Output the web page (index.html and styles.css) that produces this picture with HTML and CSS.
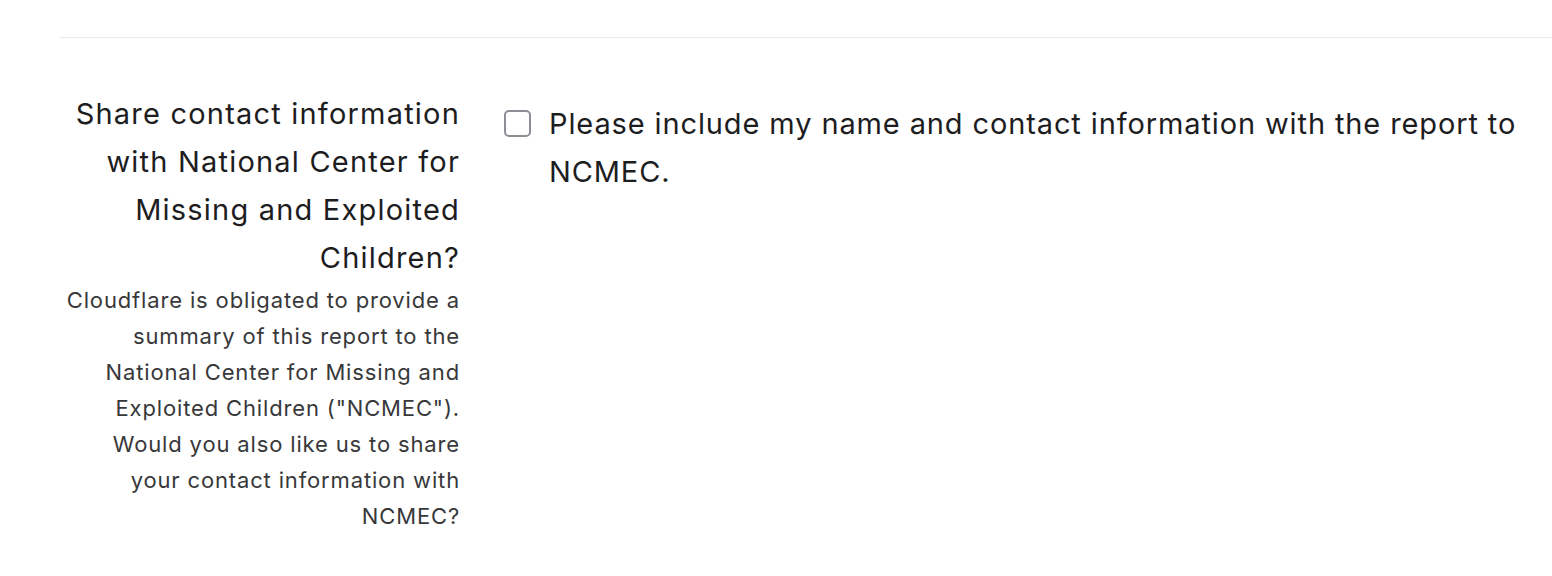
FILE: index.html
```html
<!DOCTYPE html>
<html lang="en">
<head>
<meta charset="utf-8">
<title>Share contact information</title>
<link rel="stylesheet" href="styles.css">
</head>
<body>
<div class="page">
  <hr class="divider">
  <div class="field">
    <div class="label-col">
      <label class="label" for="share">Share contact information with National Center for Missing and Exploited Children?</label>
      <p class="help">Cloudflare is obligated to provide a summary of this report to the National Center for Missing and Exploited Children ("NCMEC"). Would you also like us to share your contact information with NCMEC?</p>
    </div>
    <div class="control-col">
      <label class="check">
        <input type="checkbox" id="share" class="box">
        <span class="check-text">Please include my name and contact information with the report to NCMEC.</span>
      </label>
    </div>
  </div>
</div>
</body>
</html>
```

FILE: styles.css
```css
html, body {
  margin: 0;
  padding: 0;
  background: #ffffff;
}
body {
  font-family: Inter, "Liberation Sans", Arial, sans-serif;
  color: #1d1d1f;
}
.page {
  padding: 37px 0 0 60px;
}
.divider {
  margin: 0;
  border: 0;
  height: 1px;
  background: #e9e9e9;
}
.field {
  display: flex;
  padding-top: 52px;
}
.label-col {
  width: 400px;
  text-align: right;
  flex-shrink: 0;
}
.label {
  display: block;
  font-size: 29px;
  line-height: 48px;
  letter-spacing: 1.2px;
  color: #1d1d1f;
}
.help {
  margin: 0;
  font-size: 22px;
  line-height: 36px;
  letter-spacing: 0.85px;
  color: #38383a;
}
.control-col {
  flex: 1;
  padding-left: 44px;
  padding-top: 10px;
}
.check {
  display: flex;
  align-items: flex-start;
  gap: 18px;
}
.box {
  appearance: none;
  -webkit-appearance: none;
  margin: 10px 0 0 0;
  width: 27px;
  height: 27px;
  border: 2px solid #8e8d96;
  border-radius: 5px;
  background: #fff;
  flex-shrink: 0;
}
.check-text {
  font-size: 29px;
  line-height: 48px;
  letter-spacing: 0.88px;
  color: #1d1d1f;
}
```
